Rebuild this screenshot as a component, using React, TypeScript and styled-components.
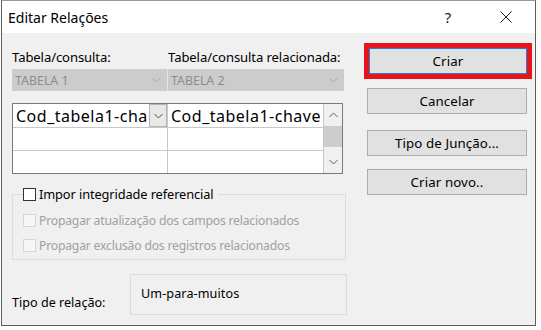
import { createGlobalStyle } from "styled-components"
import styled from "styled-components"

const GlobalStyle = createGlobalStyle`
  body {
    margin: 0;
    background: #ffffff;
    font-family: "Noto Sans", "Open Sans", sans-serif;
    font-size: 13px;
    color: #000;
  }
`

const Window = styled.div`
  width: 535px;
  height: 326px;
  margin-left: 1px;
  box-sizing: border-box;
  border: 1px solid #5c5c5c;
  border-top-color: #9a9a9a;
  background: #f0f0f0;
  display: flex;
  flex-direction: column;
`

const TitleBar = styled.div`
  height: 32px;
  flex-shrink: 0;
  background: #ffffff;
  display: flex;
  align-items: center;
  padding-left: 6px;
`

const Title = styled.div`
  flex: 1;
  font-size: 14px;
  letter-spacing: 0;
`

const CaptionButton = styled.div`
  width: 58px;
  height: 32px;
  display: flex;
  align-items: center;
  justify-content: center;
  font-size: 15px;
  color: #1a1a1a;
`

const Body = styled.div`
  flex: 1;
  display: flex;
  padding-left: 10px;
`

const LeftColumn = styled.div`
  width: 335px;
  display: flex;
  flex-direction: column;
`

const RightColumn = styled.div`
  width: 160px;
  margin-left: 20px;
  display: flex;
  flex-direction: column;
`

const LabelRow = styled.div`
  margin-top: 16px;
  display: grid;
  grid-template-columns: 156px 1fr;
  line-height: 16px;
  font-size: 13.1px;
  letter-spacing: -0.1px;
  white-space: nowrap;
`

const ComboRow = styled.div`
  margin-top: 4px;
  width: 332px;
  height: 22px;
  display: grid;
  grid-template-columns: 155px 1px 1fr;
  background: #cccccc;
`

const Combo = styled.div`
  display: flex;
  align-items: center;
  justify-content: space-between;
  padding: 0 6px 0 3px;
  color: #8d8d8d;
  font-size: 12.4px;
  letter-spacing: 0;
`

const ComboDivider = styled.div`
  background: #e6e6e6;
`

const Chevron = ({ color, up }: { color: string; up?: boolean }) => (
  <svg width="9" height="6" viewBox="0 0 9 6">
    <polyline
      points={up ? "0.5,5 4.5,1 8.5,5" : "0.5,1 4.5,5 8.5,1"}
      fill="none"
      stroke={color}
      strokeWidth="1"
    />
  </svg>
)

const Grid = styled.div`
  margin-top: 12px;
  width: 331px;
  height: 71px;
  box-sizing: border-box;
  border: 1px solid #7a7a7a;
  background: #ffffff;
  display: grid;
  grid-template-columns: 155px 156px 1fr;
`

const GridColumn = styled.div`
  display: grid;
  grid-template-rows: 24px 23px 1fr;
  border-right: 1px solid #c8c8c8;
  min-width: 0;
`

const Cell = styled.div`
  border-bottom: 1px solid #c8c8c8;
  display: flex;
  align-items: center;
  font-size: 16px;
  letter-spacing: 0.5px;
  padding-left: 3px;
  white-space: nowrap;
  min-width: 0;
  &:last-child {
    border-bottom: none;
  }
`

const CellText = styled.span`
  flex: 1;
  min-width: 0;
`

const CellDrop = styled.div`
  width: 18px;
  height: 23px;
  box-sizing: border-box;
  border: 1px solid #b4b4b4;
  background: #e8e8e8;
  display: flex;
  align-items: center;
  justify-content: center;
  flex-shrink: 0;
`

const ScrollBar = styled.div`
  background: #f0f0f0;
  display: flex;
  flex-direction: column;
  align-items: center;
`

const ScrollArrow = styled.div`
  height: 22px;
  width: 100%;
  display: flex;
  align-items: center;
  justify-content: center;
`

const ScrollThumb = styled.div`
  width: 100%;
  height: 21px;
  background: #cdcdcd;
`

const ScrollTrack = styled.div`
  flex: 1;
`

const GroupBox = styled.fieldset`
  margin: 12px 0 0 0;
  width: 334px;
  box-sizing: border-box;
  padding: 0 0 5px 10px;
  border: 1px solid #dcdcdc;
`

const Legend = styled.legend`
  padding: 0 4px 0 0;
  line-height: 16px;
  display: flex;
  align-items: center;
  gap: 3px;
  font-size: 12.8px;
  letter-spacing: -0.1px;
`

const OptionRow = styled.div<{ $gap: number }>`
  margin-top: ${p => p.$gap}px;
  height: 18px;
  display: flex;
  align-items: center;
  gap: 3px;
  color: #a0a0a0;
  font-size: 12.2px;
  letter-spacing: -0.2px;
`

const Box = styled.div<{ $disabled?: boolean }>`
  width: 13px;
  height: 13px;
  box-sizing: border-box;
  border: 1px solid ${p => (p.$disabled ? "#d6d6d6" : "#333333")};
  background: ${p => (p.$disabled ? "#f7f7f7" : "#ffffff")};
`

const RelationRow = styled.div`
  margin-top: 14px;
  display: flex;
`

const RelationLabel = styled.div`
  width: 118px;
  margin-top: 21px;
  line-height: 16px;
  font-size: 12.6px;
  letter-spacing: 0;
  white-space: nowrap;
`

const RelationBox = styled.div`
  width: 217px;
  height: 41px;
  box-sizing: border-box;
  border: 1px solid #dcdcdc;
  padding: 11px 0 0 10px;
  line-height: 16px;
  font-size: 12.6px;
  letter-spacing: 0.1px;
`

const Highlight = styled.div`
  margin: 10px -5px 0 -3px;
  border: 5px solid #e5141f;
  display: flex;
`

const Button = styled.div<{ $gap?: number; $default?: boolean }>`
  margin-top: ${p => p.$gap ?? 0}px;
  height: 26px;
  width: 100%;
  box-sizing: border-box;
  border: 1px solid ${p => (p.$default ? "#2a7fd4" : "#adadad")};
  background: #e1e1e1;
  display: flex;
  align-items: center;
  justify-content: center;
  font-size: 13.3px;
  letter-spacing: 0.1px;
`

export default function App() {
  return (
    <>
      <GlobalStyle />
      <Window>
        <TitleBar>
          <Title>Editar Relações</Title>
          <CaptionButton>?</CaptionButton>
          <CaptionButton>
            <svg width="12" height="12" viewBox="0 0 12 12">
              <path d="M0.5 0.5 L11.5 11.5 M11.5 0.5 L0.5 11.5" stroke="#1a1a1a" strokeWidth="1" />
            </svg>
          </CaptionButton>
        </TitleBar>
        <Body>
          <LeftColumn>
            <LabelRow>
              <span>Tabela/consulta:</span>
              <span>Tabela/consulta relacionada:</span>
            </LabelRow>
            <ComboRow>
              <Combo>
                TABELA 1
                <Chevron color="#a8a8a8" />
              </Combo>
              <ComboDivider />
              <Combo>
                TABELA 2
                <Chevron color="#a8a8a8" />
              </Combo>
            </ComboRow>
            <Grid>
              <GridColumn>
                <Cell>
                  <CellText>Cod_tabela1-cha</CellText>
                  <CellDrop>
                    <Chevron color="#555555" />
                  </CellDrop>
                </Cell>
                <Cell />
                <Cell />
              </GridColumn>
              <GridColumn>
                <Cell>
                  <CellText>Cod_tabela1-chave</CellText>
                </Cell>
                <Cell />
                <Cell />
              </GridColumn>
              <ScrollBar>
                <ScrollArrow>
                  <Chevron color="#606060" up />
                </ScrollArrow>
                <ScrollThumb />
                <ScrollTrack />
                <ScrollArrow>
                  <Chevron color="#606060" />
                </ScrollArrow>
              </ScrollBar>
            </Grid>
            <GroupBox>
              <Legend>
                <Box />
                Impor integridade referencial
              </Legend>
              <OptionRow $gap={9}>
                <Box $disabled />
                Propagar atualização dos campos relacionados
              </OptionRow>
              <OptionRow $gap={7}>
                <Box $disabled />
                Propagar exclusão dos registros relacionados
              </OptionRow>
            </GroupBox>
            <RelationRow>
              <RelationLabel>Tipo de relação:</RelationLabel>
              <RelationBox>Um-para-muitos</RelationBox>
            </RelationRow>
          </LeftColumn>
          <RightColumn>
            <Highlight>
              <Button $default>Criar</Button>
            </Highlight>
            <Button $gap={9}>Cancelar</Button>
            <Button $gap={16}>Tipo de Junção...</Button>
            <Button $gap={13}>Criar novo..</Button>
          </RightColumn>
        </Body>
      </Window>
    </>
  )
}
